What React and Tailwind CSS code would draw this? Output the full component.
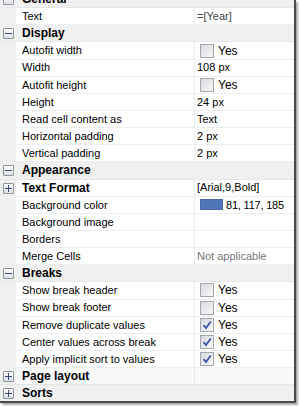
import React from 'react';

const rows = [
  { type: 'cat', label: 'General', open: true },
  { label: 'Text', value: '=[Year]', muted: true },
  { type: 'cat', label: 'Display', open: true },
  { label: 'Autofit width', check: false },
  { label: 'Width', value: '108 px' },
  { label: 'Autofit height', check: false },
  { label: 'Height', value: '24 px' },
  { label: 'Read cell content as', value: 'Text' },
  { label: 'Horizontal padding', value: '2 px' },
  { label: 'Vertical padding', value: '2 px' },
  { type: 'cat', label: 'Appearance', open: true },
  { type: 'sub', label: 'Text Format', value: '[Arial,9,Bold]' },
  { label: 'Background color', swatch: true, value: '81, 117, 185' },
  { label: 'Background image', value: '' },
  { label: 'Borders', value: '' },
  { label: 'Merge Cells', value: 'Not applicable', gray: true },
  { type: 'cat', label: 'Breaks', open: true },
  { label: 'Show break header', check: false },
  { label: 'Show break footer', check: false },
  { label: 'Remove duplicate values', check: true },
  { label: 'Center values across break', check: true },
  { label: 'Apply implicit sort to values', check: true },
  { type: 'cat', label: 'Page layout', open: false, hover: true },
  { type: 'cat', label: 'Sorts', open: false },
];

function Toggle({ open }) {
  return (
    <div className="w-[11px] h-[11px] border border-[#8e949c] rounded-[1px] bg-gradient-to-b from-white to-[#dde1e6] flex items-center justify-center relative">
      <div className="w-[7px] h-[1px] bg-[#3a4a78]" />
      {!open && <div className="absolute w-[1px] h-[7px] bg-[#3a4a78]" />}
    </div>
  );
}

function Check({ on }) {
  return (
    <div className="w-[14px] h-[14px] border border-[#a4a8ae] bg-gradient-to-br from-[#d8dade] to-[#f8f8f8] flex items-center justify-center">
      {on && (
        <svg width="10" height="10" viewBox="0 0 10 10">
          <path d="M1.5 5.2 L4 8 L8.8 1.5" fill="none" stroke="#3c55a8" strokeWidth="1.8" />
        </svg>
      )}
    </div>
  );
}

function Row({ r }) {
  if (r.type === 'cat') {
    return (
      <div className="h-[17.15px] flex items-center border-b border-[#e6e6e6] bg-[#f0f0f0]">
        <div className="w-4 h-full flex items-center justify-center shrink-0">
          <Toggle open={r.open} />
        </div>
        <div className={`flex h-full flex-1 items-center ${r.hover ? 'bg-[#f7f9fb]' : ''}`}>
          <div className={`w-[179px] h-full flex items-center pl-[6px] font-bold text-[12px] text-black ${r.hover ? 'border-r border-[#e8eaec]' : ''}`}>
            {r.label}
          </div>
        </div>
      </div>
    );
  }
  return (
    <div className="h-[17.15px] flex items-center bg-[#f0f0f0]">
      <div className="w-4 h-full flex items-center justify-center shrink-0">
        {r.type === 'sub' && <Toggle open={false} />}
      </div>
      <div className="flex flex-1 h-full bg-white border-b border-[#eceef0]">
        <div
          className={`w-[179px] h-full flex items-center pl-[6px] border-r border-[#e8eaec] overflow-hidden whitespace-nowrap text-black ${
            r.type === 'sub' ? 'font-bold text-[12px]' : 'text-[11px]'
          }`}
        >
          {r.label}
        </div>
        <div className={`flex-1 h-full flex items-center pl-[2px] text-[11px] whitespace-nowrap overflow-hidden ${r.gray ? 'text-[#777]' : r.muted ? 'text-[#444]' : 'text-black'}`}>
          {r.check !== undefined ? (
            <div className="flex items-center gap-[4px] pl-[3px]">
              <Check on={r.check} />
              <span className="text-[12px]">Yes</span>
            </div>
          ) : r.swatch ? (
            <div className="flex items-center gap-[3px] pl-[3px]">
              <div className="w-[23px] h-[11px] bg-[#5175b9] border border-[#4a69a8]" />
              <span className="text-[11px] tracking-[-0.2px]">{r.value}</span>
            </div>
          ) : (
            r.value
          )}
        </div>
      </div>
    </div>
  );
}

export default function App() {
  return (
    <div className="w-[299px] h-[406px] bg-white overflow-hidden" style={{ fontFamily: '"Liberation Sans", Arial, sans-serif' }}>
      <div className="w-[296px] h-[403px] overflow-hidden border-r-2 border-b-2 border-[#4a4a4a] shadow-[2px_2px_2px_rgba(0,0,0,0.35)] bg-[#f0f0f0]">
        <div className="mt-[-9px]">
          {rows.map((r, i) => (
            <Row key={i} r={r} />
          ))}
        </div>
      </div>
    </div>
  );
}
